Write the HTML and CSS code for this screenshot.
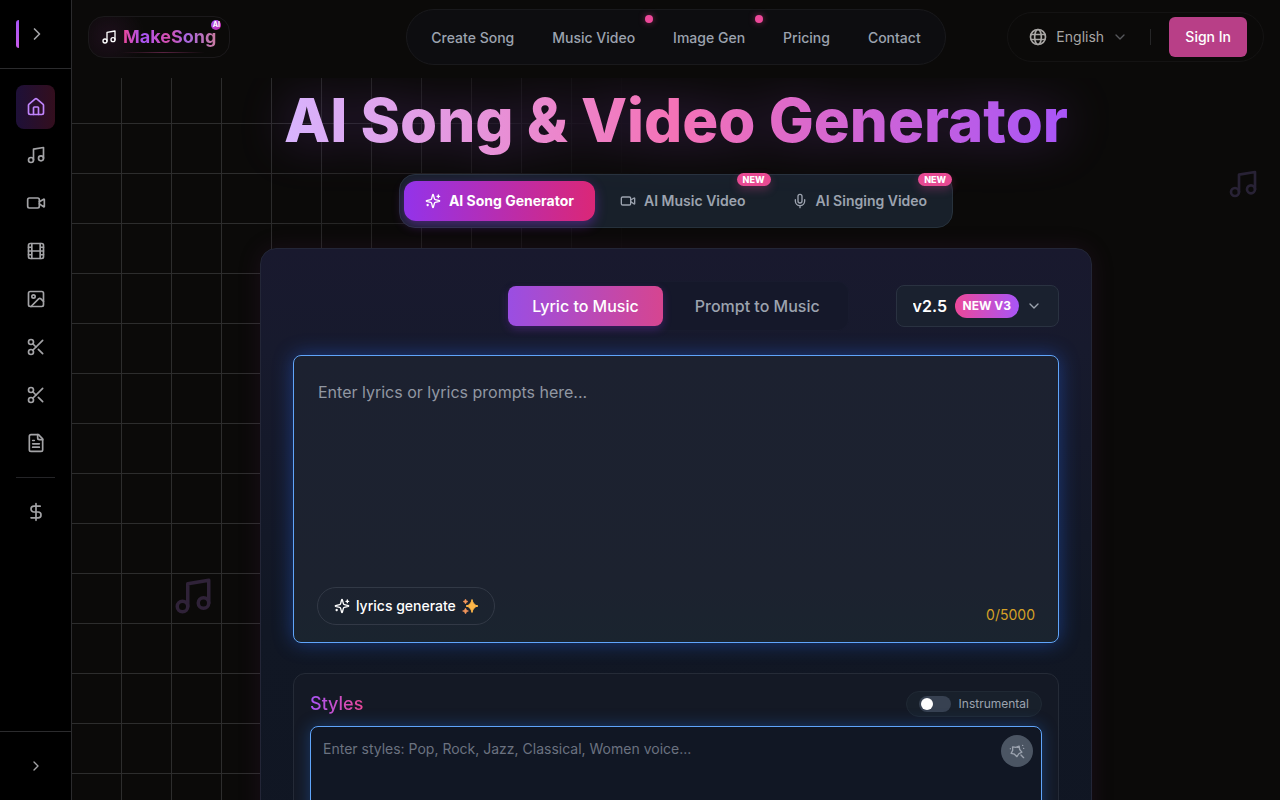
FILE: index.html
```html
<!DOCTYPE html>
<html lang="en">
<head>
    <meta charset="UTF-8">
    <meta name="viewport" content="width=device-width, initial-scale=1.0">
    <title>MakeSong - AI Song &amp; Video Generator</title>
    <link rel="stylesheet" href="styles.css">
</head>
<body>
    <!-- Shared icon shapes -->
    <svg class="sprite" aria-hidden="true">
        <symbol id="i-right" viewBox="0 0 24 24"><path d="m9 18 6-6-6-6"/></symbol>
        <symbol id="i-down" viewBox="0 0 24 24"><path d="m6 9 6 6 6-6"/></symbol>
        <symbol id="i-home" viewBox="0 0 24 24"><path d="M15 21v-8a1 1 0 0 0-1-1h-4a1 1 0 0 0-1 1v8"/><path d="M3 10a2 2 0 0 1 .709-1.528l7-6a2 2 0 0 1 2.582 0l7 6A2 2 0 0 1 21 10v9a2 2 0 0 1-2 2H5a2 2 0 0 1-2-2z"/></symbol>
        <symbol id="i-music" viewBox="0 0 24 24"><path d="M9 18V5l12-2v13"/><circle cx="6" cy="18" r="3"/><circle cx="18" cy="16" r="3"/></symbol>
        <symbol id="i-video" viewBox="0 0 24 24"><path d="m16 13 5.223 3.482a.5.5 0 0 0 .777-.416V7.870a.5.5 0 0 0-.752-.432L16 10.500"/><rect x="2" y="6" width="14" height="12" rx="2"/></symbol>
        <symbol id="i-film" viewBox="0 0 24 24"><rect width="18" height="18" x="3" y="3" rx="2"/><path d="M7 3v18M3 7.500h4M3 12h18M3 16.500h4M17 3v18M17 7.500h4M17 16.500h4"/></symbol>
        <symbol id="i-image" viewBox="0 0 24 24"><rect width="18" height="18" x="3" y="3" rx="2"/><circle cx="9" cy="9" r="2"/><path d="m21 15-3.086-3.086a2 2 0 0 0-2.828 0L6 21"/></symbol>
        <symbol id="i-scissors" viewBox="0 0 24 24"><circle cx="6" cy="6" r="3"/><path d="M8.120 8.120 12 12"/><path d="M20 4 8.120 15.880"/><circle cx="6" cy="18" r="3"/><path d="M14.800 14.800 20 20"/></symbol>
        <symbol id="i-file" viewBox="0 0 24 24"><path d="M15 2H6a2 2 0 0 0-2 2v16a2 2 0 0 0 2 2h12a2 2 0 0 0 2-2V7Z"/><path d="M14 2v4a2 2 0 0 0 2 2h4M10 9H8M16 13H8M16 17H8"/></symbol>
        <symbol id="i-dollar" viewBox="0 0 24 24"><path d="M12 2v20"/><path d="M17 5H9.500a3.500 3.500 0 0 0 0 7h5a3.500 3.500 0 0 1 0 7H6"/></symbol>
        <symbol id="i-globe" viewBox="0 0 24 24"><circle cx="12" cy="12" r="9"/><ellipse cx="12" cy="12" rx="4" ry="9"/><path d="M4 9h16M4 15h16"/></symbol>
        <symbol id="i-sparkles" viewBox="0 0 24 24"><path d="M9.937 15.500A2 2 0 0 0 8.500 14.063l-6.135-1.582a.5.5 0 0 1 0-.962L8.500 9.936A2 2 0 0 0 9.937 8.500l1.582-6.135a.5.5 0 0 1 .963 0L14.063 8.500A2 2 0 0 0 15.500 9.937l6.135 1.581a.5.5 0 0 1 0 .964L15.500 14.063a2 2 0 0 0-1.437 1.437l-1.582 6.135a.5.5 0 0 1-.963 0z"/><path d="M20 3v4M22 5h-4M4 17v2M5 18H3"/></symbol>
        <symbol id="i-mic" viewBox="0 0 24 24"><path d="M12 2a3 3 0 0 0-3 3v7a3 3 0 0 0 6 0V5a3 3 0 0 0-3-3Z"/><path d="M19 10v2a7 7 0 0 1-14 0v-2M12 19v3"/></symbol>
        <symbol id="i-wand" viewBox="0 0 24 24"><path d="M15.200 4.600 16 9.800l3.300 4-4.600 2.300-2.800 4.400-3.700-3.700-5-1.300 2.400-4.600-.3-5.200 5.100.8z"/><path d="m18 18 4 4M20.500 3.500v.1M22 8v.1M2 8.500v.1"/></symbol>
    </svg>

    <div class="app">
        <aside class="sidebar">
            <div class="sidebar-top">
                <span class="accent"></span>
                <button class="icon-btn" type="button" aria-label="Expand menu"><svg class="icon"><use href="#i-right"/></svg></button>
            </div>
            <nav class="side-nav" aria-label="Tools">
                <a class="side-link active" href="#" aria-label="Home"><svg class="icon"><use href="#i-home"/></svg></a>
                <a class="side-link" href="#" aria-label="Create song"><svg class="icon"><use href="#i-music"/></svg></a>
                <a class="side-link" href="#" aria-label="Music video"><svg class="icon"><use href="#i-video"/></svg></a>
                <a class="side-link" href="#" aria-label="Video"><svg class="icon"><use href="#i-film"/></svg></a>
                <a class="side-link" href="#" aria-label="Image"><svg class="icon"><use href="#i-image"/></svg></a>
                <a class="side-link" href="#" aria-label="Vocal remover"><svg class="icon"><use href="#i-scissors"/></svg></a>
                <a class="side-link" href="#" aria-label="Audio cutter"><svg class="icon"><use href="#i-scissors"/></svg></a>
                <a class="side-link" href="#" aria-label="Lyrics"><svg class="icon"><use href="#i-file"/></svg></a>
                <hr class="side-rule">
                <a class="side-link" href="#" aria-label="Pricing"><svg class="icon"><use href="#i-dollar"/></svg></a>
            </nav>
            <div class="sidebar-bottom">
                <button class="icon-btn" type="button" aria-label="Expand"><svg class="icon icon-sm"><use href="#i-right"/></svg></button>
            </div>
        </aside>

        <div class="page">
            <svg class="icon note note-left" aria-hidden="true"><use href="#i-music"/></svg>
            <svg class="icon note note-right" aria-hidden="true"><use href="#i-music"/></svg>

            <header class="header">
                <a class="logo" href="#">
                    <svg class="icon icon-sm"><use href="#i-music"/></svg>
                    <span class="logo-text">MakeSong</span>
                    <span class="logo-badge">AI</span>
                </a>
                <nav class="top-nav" aria-label="Main">
                    <a href="#">Create Song</a>
                    <a class="has-dot" href="#">Music Video</a>
                    <a class="has-dot" href="#">Image Gen</a>
                    <a href="#">Pricing</a>
                    <a href="#">Contact</a>
                </nav>
                <div class="account">
                    <label class="language">
                        <svg class="icon"><use href="#i-globe"/></svg>
                        <select class="plain-select" aria-label="Language"><option>English</option></select>
                        <svg class="icon icon-sm dim"><use href="#i-down"/></svg>
                    </label>
                    <span class="account-rule"></span>
                    <button class="sign-in" type="button">Sign In</button>
                </div>
            </header>

            <main class="content">
                <h1>AI Song &amp; Video Generator</h1>

                <div class="tabs">
                    <button class="tab active" type="button"><svg class="icon icon-sm"><use href="#i-sparkles"/></svg>AI Song Generator</button>
                    <button class="tab" type="button"><svg class="icon icon-sm"><use href="#i-video"/></svg>AI Music Video<span class="new">NEW</span></button>
                    <button class="tab" type="button"><svg class="icon icon-sm"><use href="#i-mic"/></svg>AI Singing Video<span class="new">NEW</span></button>
                </div>

                <section class="card">
                    <div class="card-top">
                        <div class="modes">
                            <button class="mode active" type="button">Lyric to Music</button>
                            <button class="mode" type="button">Prompt to Music</button>
                        </div>
                        <label class="version">
                            <select class="plain-select" aria-label="Model version"><option>v2.5</option></select>
                            <span class="version-badge">NEW V3</span>
                            <svg class="icon icon-sm"><use href="#i-down"/></svg>
                        </label>
                    </div>

                    <div class="lyrics">
                        <textarea class="lyrics-input" aria-label="Lyrics" placeholder="Enter lyrics or lyrics prompts here..."></textarea>
                        <button class="generate" type="button">
                            <svg class="icon icon-sm"><use href="#i-sparkles"/></svg>
                            lyrics generate
                            <svg class="sparkle" viewBox="0 0 16 16" aria-hidden="true"><path d="M10 1.500Q11 7 16 8Q11 9 10 14.500Q9 9 4 8Q9 7 10 1.500z" fill="#fdb648" stroke="#fdb648"/><path d="M3.500 1Q4 3 6 3.500Q4 4 3.500 6Q3 4 1 3.500Q3 3 3.500 1zM3.500 10Q4 12.500 6.500 13Q4 13.500 3.500 16Q3 13.500 .5 13Q3 12.500 3.500 10z" fill="#f2955a" stroke="#f2955a" stroke-width=".5"/></svg>
                        </button>
                        <span class="counter">0/5000</span>
                    </div>

                    <div class="styles-panel">
                        <div class="styles-head">
                            <label class="styles-title" for="styles">Styles</label>
                            <label class="instrumental"><input class="switch" type="checkbox" role="switch">Instrumental</label>
                        </div>
                        <div class="styles-box">
                            <textarea class="styles-input" id="styles" placeholder="Enter styles: Pop, Rock, Jazz, Classical, Women voice..."></textarea>
                            <button class="wand" type="button" aria-label="Suggest styles"><svg class="icon icon-sm"><use href="#i-wand"/></svg></button>
                        </div>
                    </div>
                </section>
            </main>
        </div>
    </div>
</body>
</html>
```

FILE: styles.css
```css
* {
    box-sizing: border-box;
}
body {
    margin: 0;
    background: #0b0a09;
    color: #9ca3af;
    font-family: Inter, "Liberation Sans", sans-serif;
    font-size: 14px;
    line-height: 20px;
}
button, select, textarea {
    font: inherit;
    color: inherit;
}
button {
    border: none;
    background: none;
    padding: 0;
    cursor: pointer;
}
a {
    color: inherit;
    text-decoration: none;
}
.sprite {
    display: none;
}
.icon {
    width: 20px;
    height: 20px;
    flex: none;
    fill: none;
    stroke: currentColor;
    stroke-width: 2;
    stroke-linecap: round;
    stroke-linejoin: round;
}
.icon-sm {
    width: 16px;
    height: 16px;
}
.app {
    display: flex;
    height: 100vh;
}

/* Sidebar */
.sidebar {
    width: 72px;
    flex: none;
    display: flex;
    flex-direction: column;
    background: #000;
    border-right: 1px solid #2b2b2d;
    color: #a3a3a6;
}
.sidebar-top {
    height: 69px;
    display: flex;
    align-items: center;
    padding: 0 16px;
    gap: 8px;
    border-bottom: 1px solid #2b2b2d;
}
.accent {
    width: 3px;
    height: 28px;
    border-radius: 8px 0 0 8px;
    background: linear-gradient(#a855f7, #c65be8);
}
.icon-btn {
    display: flex;
}
.side-nav {
    flex: 1;
    display: flex;
    flex-direction: column;
    gap: 4px;
    padding: 16px;
}
.side-link {
    height: 44px;
    display: flex;
    align-items: center;
    justify-content: center;
    border-radius: 8px;
}
.side-link.active {
    color: #c084fc;
    background: linear-gradient(90deg, #1e1038, #330e1d);
}
.side-rule {
    width: 100%;
    margin: 8px 0;
    border: none;
    border-top: 1px solid #242427;
}
.sidebar-bottom {
    height: 69px;
    display: flex;
    align-items: center;
    justify-content: center;
    border-top: 1px solid #2b2b2d;
}

/* Page with the fading grid behind it */
.page {
    flex: 1;
    min-width: 0;
    position: relative;
    overflow-y: auto;
    scrollbar-width: none;
}
.page::before {
    content: "";
    position: absolute;
    inset: 0;
    background-image:
        linear-gradient(90deg, #2d2d2d 1px, transparent 1px),
        linear-gradient(#2d2d2d 1px, transparent 1px);
    background-size: 50px 50px;
    background-position: -1px 23px;
    -webkit-mask-image: linear-gradient(90deg, #000 15%, transparent 48%);
    mask-image: linear-gradient(90deg, #000 15%, transparent 48%);
}
.note {
    position: absolute;
    color: #2f2238;
}
.note-left {
    left: 100px;
    top: 575px;
    width: 42px;
    height: 42px;
}
.note-right {
    right: 21px;
    top: 168px;
    width: 32px;
    height: 32px;
    color: #282235;
}

/* Header */
.header {
    position: sticky;
    top: 0;
    z-index: 2;
    display: grid;
    grid-template-columns: 1fr auto 1fr;
    align-items: center;
    padding: 9px 16px 13px;
    background: #0b0a09;
}
.logo {
    position: relative;
    justify-self: start;
    display: flex;
    align-items: center;
    gap: 6px;
    height: 42px;
    padding: 0 13px 0 12px;
    border: 1px solid #1b191b;
    border-radius: 16px;
    color: #fff;
    background: radial-gradient(circle at 20px 20px, #1d0f1b, transparent 36px);
}
.logo::after {
    content: "";
    position: absolute;
    left: 32px;
    right: 24px;
    bottom: 4px;
    height: 1px;
    background: linear-gradient(90deg, transparent, #5a2342, transparent);
}
.logo-text {
    font-size: 18px;
    font-weight: 700;
    line-height: 22px;
    color: transparent;
    background: linear-gradient(90deg, #ec4899, #a855f7 22%, #d64fae 48%, #a967e0 68%, #c87aa0);
    -webkit-background-clip: text;
    background-clip: text;
}
.logo-badge {
    position: absolute;
    top: 3px;
    right: 8px;
    width: 10px;
    height: 10px;
    border-radius: 50%;
    background: linear-gradient(135deg, #a855f7, #c026a3);
    font-size: 7px;
    font-weight: 700;
    line-height: 10px;
    text-align: center;
}
.top-nav {
    display: flex;
    align-items: center;
    gap: 6px;
    height: 56px;
    padding: 0 8px;
    border: 1px solid #19191c;
    border-radius: 28px;
    background: #0d0d10;
    font-weight: 500;
}
.top-nav a {
    position: relative;
    padding: 9px 16px 7px;
}
.has-dot::after {
    content: "";
    position: absolute;
    top: -4px;
    right: -2px;
    width: 8px;
    height: 8px;
    border-radius: 50%;
    background: #ec4899;
    box-shadow: 0 0 6px #7a2450;
}
.account {
    justify-self: end;
    display: flex;
    align-items: center;
    height: 50px;
    padding: 0 16px 0 20px;
    border: 1px solid #141313;
    border-radius: 25px;
}
.language {
    display: flex;
    align-items: center;
    gap: 8px;
    color: #a8a6a4;
}
.plain-select {
    appearance: none;
    border: none;
    background: none;
    padding: 0;
    outline: none;
}
.dim {
    color: #57585c;
}
.account-rule {
    width: 1px;
    height: 16px;
    margin: 0 18px 0 22px;
    background: #262627;
}
.sign-in {
    height: 40px;
    padding: 0 16px;
    border-radius: 6px;
    background: #b83f87;
    color: #fff;
    font-weight: 500;
}

/* Content */
.content {
    position: relative;
    display: flex;
    flex-direction: column;
    align-items: center;
    max-width: 896px;
    margin: 0 auto;
    padding: 6px 32px 32px;
}
h1 {
    margin: 0 0 18px;
    font-size: 60px;
    font-weight: 800;
    line-height: 72px;
    white-space: nowrap;
    color: transparent;
    background: linear-gradient(90deg, #d8b4fe, #f472b6 50%, #a855f7);
    -webkit-background-clip: text;
    background-clip: text;
    filter: drop-shadow(0 0 24px rgba(168, 85, 247, 0.3));
}
.tabs {
    display: flex;
    gap: 4px;
    padding: 6px 4px;
    margin-bottom: 20px;
    border: 1px solid #27323c;
    border-radius: 16px;
    background: #18202a;
}
.tab {
    position: relative;
    display: flex;
    align-items: center;
    gap: 8px;
    height: 40px;
    padding: 0 21px;
    border-radius: 12px;
    font-weight: 600;
    white-space: nowrap;
}
.tab.active {
    color: #fff;
    font-weight: 700;
    background: linear-gradient(90deg, #9333ea, #db2777);
    box-shadow: 0 4px 12px rgba(147, 51, 234, 0.4);
}
.new {
    position: absolute;
    top: -8px;
    right: -4px;
    padding: 0 6px;
    border-radius: 8px;
    background: #e84a93;
    color: #fff;
    font-size: 9px;
    font-weight: 800;
    line-height: 13px;
    box-shadow: 0 4px 8px rgba(236, 72, 153, 0.25);
}
.card {
    width: 100%;
    padding: 32px;
    border: 1px solid #232637;
    border-radius: 16px;
    background: linear-gradient(#19192e, #171a2d 100px, #111724 380px, #101623);
    box-shadow: 0 0 24px rgba(120, 40, 120, 0.14);
}
.card-top {
    display: grid;
    grid-template-columns: 1fr auto 1fr;
    align-items: center;
    margin-bottom: 24px;
}
.modes {
    grid-column: 2;
    display: flex;
    gap: 8px;
    padding: 4px;
    border: 1px solid #181b2e;
    border-radius: 12px;
    background: #15182a;
}
.mode {
    height: 40px;
    padding: 0 24px;
    border-radius: 8px;
    font-size: 16px;
    font-weight: 500;
}
.mode.active {
    color: #fff;
    background: linear-gradient(90deg, #9a4ee3, #d64590);
    box-shadow: 0 3px 8px rgba(147, 51, 234, 0.3);
}
.version {
    justify-self: end;
    display: flex;
    align-items: center;
    gap: 7px;
    height: 42px;
    padding: 0 16px;
    border: 1px solid #2a3241;
    border-radius: 8px;
    background: #1a212f;
}
.version .plain-select {
    color: #fff;
    font-size: 16px;
    font-weight: 600;
}
.version-badge {
    padding: 0 8px;
    border-radius: 12px;
    background: linear-gradient(90deg, #ec4899, #a855f7);
    color: #fff;
    font-size: 12px;
    font-weight: 700;
    line-height: 24px;
}
.lyrics {
    position: relative;
    margin-bottom: 30px;
}
textarea {
    display: block;
    width: 100%;
    resize: none;
    outline: none;
    border: 1px solid #60a5fa;
    border-radius: 8px;
    color: #fff;
}
.lyrics-input {
    height: 288px;
    padding: 24px;
    background: linear-gradient(#1c2130, #1c222f 80%, #1a242f);
    box-shadow: 0 0 20px rgba(37, 99, 235, 0.45);
    font-size: 16px;
    line-height: 24px;
}
.lyrics-input::placeholder {
    color: #9197a2;
}
.generate {
    position: absolute;
    left: 24px;
    bottom: 18px;
    display: flex;
    align-items: center;
    gap: 6px;
    height: 38px;
    padding: 0 16px;
    border: 1px solid #323946;
    border-radius: 19px;
    color: #fff;
    font-weight: 500;
}
.sparkle {
    width: 16px;
    height: 16px;
}
.counter {
    position: absolute;
    right: 24px;
    bottom: 18px;
    color: #d6a126;
}
.styles-panel {
    padding: 16px;
    border: 1px solid #252b37;
    border-radius: 12px;
    background: #141925;
}
.styles-head {
    display: flex;
    align-items: center;
    justify-content: space-between;
    height: 28px;
    margin-bottom: 8px;
}
.styles-title {
    font-size: 18px;
    font-weight: 500;
    line-height: 28px;
    color: transparent;
    background: linear-gradient(90deg, #a855f7, #ec4899);
    -webkit-background-clip: text;
    background-clip: text;
}
.instrumental {
    display: flex;
    align-items: center;
    gap: 8px;
    height: 26px;
    padding: 0 12px;
    border: 1px solid #202934;
    border-radius: 13px;
    background: #18202b;
    font-size: 12px;
}
.switch {
    appearance: none;
    width: 32px;
    height: 16px;
    margin: 0;
    padding: 2px;
    border-radius: 8px;
    background: #374151;
}
.switch::before {
    content: "";
    display: block;
    width: 12px;
    height: 12px;
    border-radius: 50%;
    background: #fff;
}
.switch:checked::before {
    margin-left: auto;
}
.styles-box {
    position: relative;
}
.styles-input {
    height: 120px;
    padding: 12px;
    background: #111724;
    box-shadow: 0 0 16px rgba(37, 120, 235, 0.35);
}
.styles-input::placeholder {
    color: #6b7280;
}
.wand {
    position: absolute;
    top: 9px;
    right: 9px;
    width: 32px;
    height: 32px;
    display: flex;
    align-items: center;
    justify-content: center;
    border-radius: 50%;
    background: #4b5563;
}
```
